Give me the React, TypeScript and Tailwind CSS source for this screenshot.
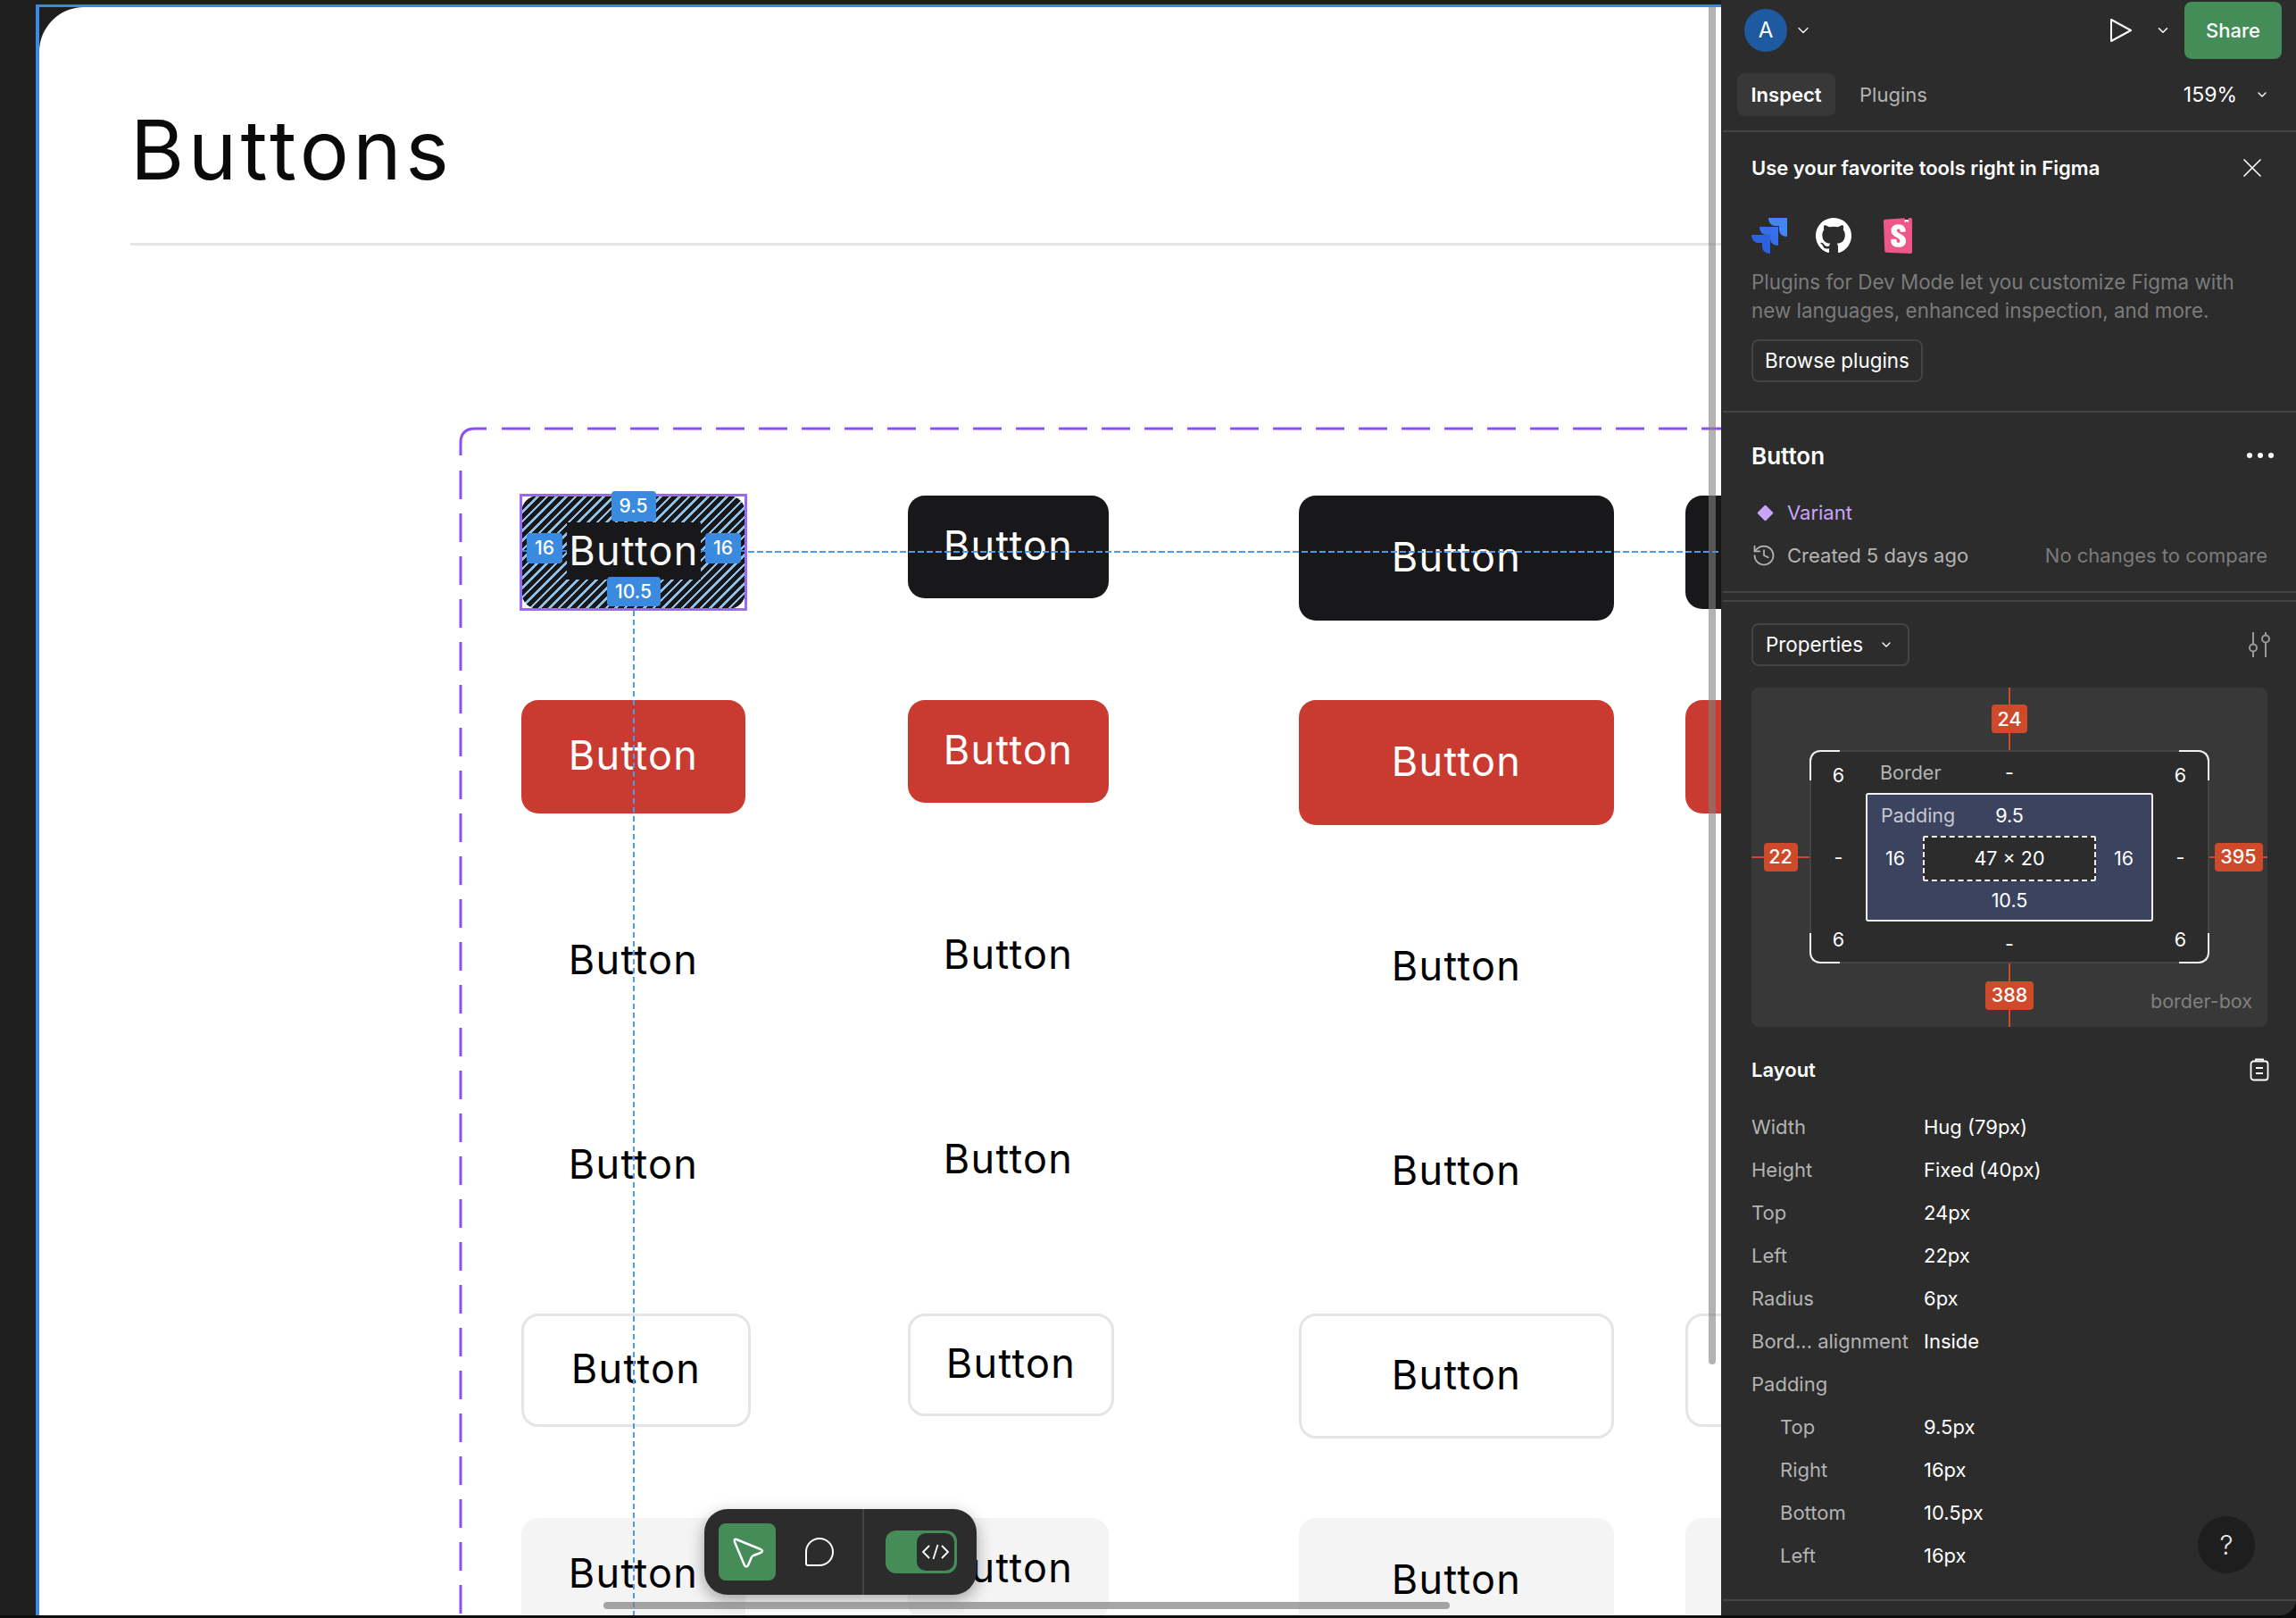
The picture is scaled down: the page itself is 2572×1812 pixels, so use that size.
import React from 'react'
import { ChevronDown, History, X } from 'lucide-react'
import { BsGithub } from 'react-icons/bs'
import { SiStorybook } from 'react-icons/si'

const rowStyles = [
  'bg-[#18181a] text-white',
  'bg-[#c93b30] text-white',
  'text-black',
  'text-black',
  'border-[3px] border-[#e5e5e8] bg-white text-black',
  'bg-[#f4f4f4] text-black',
]

const columnSizes = ['w-[251px] h-[127px]', 'w-[225px] h-[115px]', 'w-[353px] h-[140px]', 'w-[251px] h-[127px]']
const outlineSizes = ['w-[257px] h-[127px]', 'w-[231px] h-[115px]', 'w-[353px] h-[140px]', 'w-[257px] h-[127px]']

const layoutRows = [
  { label: 'Width', value: 'Hug (79px)' },
  { label: 'Height', value: 'Fixed (40px)' },
  { label: 'Top', value: '24px' },
  { label: 'Left', value: '22px' },
  { label: 'Radius', value: '6px' },
  { label: 'Bord... alignment', value: 'Inside' },
  { label: 'Padding', value: '' },
  { label: 'Top', value: '9.5px', indent: true },
  { label: 'Right', value: '16px', indent: true },
  { label: 'Bottom', value: '10.5px', indent: true },
  { label: 'Left', value: '16px', indent: true },
]

function SelectedButton() {
  return (
    <div className="relative flex h-[127px] w-[251px] flex-col items-center rounded-[19px] bg-[repeating-linear-gradient(135deg,#18181a_0_5px,#8fc0e8_5px_7.5px)]">
      <div className="absolute -inset-[2px] rounded-[1px] border-[3px] border-[#9b68f6]" />
      <span className="relative z-10 -mt-[5px] flex h-[34px] w-[50px] items-center justify-center rounded-[4px] bg-[#3a8ae0] text-[21px] font-medium text-white">9.5</span>
      <div className="mt-[1px] flex h-[64px] items-center">
        <span className="h-[2px] w-[6px] bg-[#3a8ae0]" />
        <span className="-mt-[6px] flex h-[34px] w-[40px] items-center justify-center rounded-[4px] bg-[#3a8ae0] text-[21px] font-medium text-white">16</span>
        <span className="h-[2px] w-[5px] bg-[#3a8ae0]" />
        <span className="flex h-[64px] w-[150px] items-center justify-center bg-[#18181a] text-[45px] tracking-[1.3px] text-[#f8f8f8]">Button</span>
        <span className="h-[2px] w-[5px] bg-[#3a8ae0]" />
        <span className="-mt-[6px] flex h-[34px] w-[40px] items-center justify-center rounded-[4px] bg-[#3a8ae0] text-[21px] font-medium text-white">16</span>
        <span className="h-[2px] w-[5px] bg-[#3a8ae0]" />
      </div>
      <span className="relative z-10 -mt-[3px] flex h-[33px] w-[60px] items-center justify-center rounded-[4px] bg-[#3a8ae0] text-[21px] font-medium text-white">10.5</span>
    </div>
  )
}

function ButtonFrame() {
  return (
    <div className="relative mt-[205px] ml-[370px] h-[1400px] w-[1600px]">
      <svg className="absolute -top-[2px] -left-[2px]" width="1600" height="1400" fill="none" stroke="#8b4ff5" strokeWidth="3">
        <path d="M2 32V18Q2 2 18 2H31" />
        <path d="M48 2H1600" strokeDasharray="32 16" />
        <path d="M2 49V1400" strokeDasharray="32 16" />
      </svg>
      <div className="grid auto-rows-[229px] grid-cols-[433px_438px_433px_252px] pt-[75px] pl-[68px]">
        {rowStyles.map((style, row) =>
          columnSizes.map((size, col) =>
            row === 0 && col === 0 ? (
              <SelectedButton key="selected" />
            ) : (
              <div
                key={`${row}-${col}`}
                className={`flex items-center justify-center rounded-[19px] pb-[3px] text-[45px] tracking-[1.3px] ${style} ${row === 4 ? outlineSizes[col] : size}`}
              >
                Button
              </div>
            ),
          ),
        )}
      </div>
      <div className="absolute top-[204px] left-[193px] h-[1125px] w-[2px] bg-[repeating-linear-gradient(180deg,#4a9af5_0_6px,transparent_6px_10px)]" />
      <div className="absolute top-[137px] left-[322px] h-[2px] w-[1090px] bg-[repeating-linear-gradient(90deg,#4a9af5_0_7px,transparent_7px_10px)]" />
    </div>
  )
}

function Toolbar() {
  return (
    <div className="absolute bottom-[23px] left-[745px] flex h-[96px] w-[305px] items-center rounded-[26px] bg-[#2c2c2c] pl-[16px] shadow-[0_6px_18px_rgba(0,0,0,0.35)]">
      <div className="flex h-[64px] w-[64px] items-center justify-center rounded-[8px] bg-[#458c58]">
        <svg width="64" height="64" fill="none" stroke="white" strokeWidth="2.5" strokeLinejoin="round">
          <path d="M20 18L47 29Q51 31 47 33L39 36Q37 37 36.5 39L33 47Q31 50 29 47L18 21Q17 17 20 18Z" />
        </svg>
      </div>
      <div className="ml-[33px] flex h-[64px] w-[32px] items-center">
        <svg width="32" height="32" fill="none" stroke="white" strokeWidth="2">
          <path d="M1 29V16A15 15 0 1 1 16 31H3Q1 31 1 29Z" />
        </svg>
      </div>
      <div className="ml-[32px] h-full w-[2px] bg-[#444444]" />
      <div className="ml-[24px] flex h-[48px] w-[80px] items-center justify-end rounded-[12px] bg-[#458c58] pr-[3px]">
        <div className="flex h-[42px] w-[42px] items-center justify-center rounded-[10px] bg-[#2c2c2c]">
          <svg width="32" height="18" fill="none" stroke="white" strokeWidth="1.8">
            <path d="M9 2L2 9L9 16M23 2L30 9L23 16M18.5 1L13.5 17" />
          </svg>
        </div>
      </div>
    </div>
  )
}

function Canvas() {
  return (
    <div className="min-w-0 flex-1 bg-[#1e1e1e] pt-[5px] pl-[40px]">
      <div className="h-full border-t-[3px] border-l-4 border-[#3f8ae0]">
        <div className="relative h-full overflow-hidden rounded-tl-[50px] bg-white">
          <div className="pt-[104px] pl-[102px]">
            <h1 className="text-[92px] leading-[112px] font-normal tracking-[4.5px] text-[#0a0a0a]">Buttons</h1>
            <div className="mt-[48px] h-[3px] bg-[#e5e5e5]" />
            <ButtonFrame />
          </div>
          <Toolbar />
          <div className="absolute bottom-[7px] left-[632px] h-[8px] w-[948px] rounded-full bg-[#808080]/70" />
          <div className="absolute top-0 right-[6px] h-[1520px] w-[8px] rounded-b-[4px] bg-[#808080]/60" />
        </div>
      </div>
    </div>
  )
}

function JiraLogo() {
  return (
    <svg width="40" height="40" viewBox="0 0 40 40">
      <path d="M40 0H19C19 5 22 9 27 9H31V13C31 18 35 21 40 21Z" fill="#4285f8" />
      <path d="M30 10H9C9 15 12 19 17 19H21V23C21 28 25 31 30 31Z" fill="#3570ea" />
      <path d="M21 19H0C0 24 3 28 8 28H12V32C12 37 16 40 21 40Z" fill="#2b62e0" />
    </svg>
  )
}

function BoxModel() {
  return (
    <div className="mt-[24px] grid h-[380px] grid-cols-[65px_448px_65px] grid-rows-[70px_239px_71px] rounded-[8px] bg-[#383838] text-[21.5px] text-white">
      <div className="col-start-2 flex flex-col items-center">
        <span className="w-[2px] flex-1 bg-[#cf4a2b]" />
        <span className="flex h-[32px] w-[40px] items-center justify-center rounded-[4px] bg-[#cf4a2b] font-medium">24</span>
        <span className="w-[2px] flex-1 bg-[#cf4a2b]" />
      </div>
      <div className="col-start-1 row-start-2 flex items-center">
        <span className="h-[2px] flex-1 bg-[#cf4a2b]" />
        <span className="flex h-[32px] w-[38px] shrink-0 items-center justify-center rounded-[4px] bg-[#cf4a2b] font-medium">22</span>
        <span className="h-[2px] flex-1 bg-[#cf4a2b]" />
      </div>

      <div className="relative col-start-2 row-start-2 grid grid-cols-[61px_322px_61px] grid-rows-[46px_144px_45px] rounded-[12px] border-2 border-[#444444] bg-[#2c2c2c]">
        <div className="absolute -top-[2px] -left-[2px] h-[34px] w-[34px] rounded-tl-[12px] border-t-2 border-l-2 border-[#f0f0f0]" />
        <div className="absolute -top-[2px] -right-[2px] h-[34px] w-[34px] rounded-tr-[12px] border-t-2 border-r-2 border-[#f0f0f0]" />
        <div className="absolute -bottom-[2px] -left-[2px] h-[34px] w-[34px] rounded-bl-[12px] border-b-2 border-l-2 border-[#f0f0f0]" />
        <div className="absolute -right-[2px] -bottom-[2px] h-[34px] w-[34px] rounded-br-[12px] border-r-2 border-b-2 border-[#f0f0f0]" />

        <span className="flex items-center justify-center pt-[6px]">6</span>
        <div className="grid grid-cols-[1fr_auto_1fr] items-center px-[16px]">
          <span className="text-[#b3b3b3]">Border</span>
          <span>-</span>
        </div>
        <span className="flex items-center justify-center pt-[6px]">6</span>

        <span className="flex items-center justify-center">-</span>
        <div className="grid grid-cols-[62px_194px_62px] grid-rows-[46px_51px_43px] items-center rounded-[3px] border-2 border-[#f0f0f0] bg-[#3c435f]">
          <div className="col-span-3 grid grid-cols-[1fr_auto_1fr] items-center px-[15px]">
            <span className="text-[#c4c6cf]">Padding</span>
            <span>9.5</span>
          </div>
          <span className="text-center">16</span>
          <div className="flex h-[51px] items-center justify-center rounded-[2px] border-2 border-dashed border-[#f0f0f0] bg-[#2c2c2c]">47 × 20</div>
          <span className="text-center">16</span>
          <span className="col-span-3 text-center">10.5</span>
        </div>
        <span className="flex items-center justify-center">-</span>

        <span className="flex items-center justify-center pb-[5px]">6</span>
        <span className="flex items-center justify-center pt-[5px]">-</span>
        <span className="flex items-center justify-center pb-[5px]">6</span>
      </div>

      <div className="col-start-3 row-start-2 flex items-center">
        <span className="h-[2px] flex-1 bg-[#cf4a2b]" />
        <span className="flex h-[32px] w-[54px] shrink-0 items-center justify-center rounded-[4px] bg-[#cf4a2b] font-medium">395</span>
        <span className="h-[2px] flex-1 bg-[#cf4a2b]" />
      </div>
      <div className="col-start-2 row-start-3 grid grid-cols-[1fr_auto_1fr]">
        <div className="col-start-2 flex h-[71px] flex-col items-center">
          <span className="w-[2px] flex-1 bg-[#cf4a2b]" />
          <span className="flex h-[32px] w-[54px] items-center justify-center rounded-[4px] bg-[#cf4a2b] font-medium">388</span>
          <span className="w-[2px] flex-1 bg-[#cf4a2b]" />
        </div>
      </div>
      <div className="col-span-2 col-start-2 row-start-3 flex items-end justify-end pr-[17px] pb-[13px] text-[#808080]">border-box</div>
    </div>
  )
}

function Panel() {
  return (
    <aside className="w-[644px] shrink-0 rounded-br-[18px] border-l-2 border-[#2c2c2c] bg-[#2c2c2c] text-[22px] text-white">
      <header className="flex h-[68px] items-center pr-[16px] pl-[24px]">
        <div className="flex h-[48px] w-[48px] items-center justify-center rounded-full bg-[#1e5aa0] text-[24px]">A</div>
        <ChevronDown className="ml-[8px] h-[20px] w-[20px]" strokeWidth={1.5} />
        <svg className="ml-auto" width="26" height="30" fill="none" stroke="white" strokeWidth="2" strokeLinejoin="round">
          <path d="M2 3L24 15L2 27Z" />
        </svg>
        <ChevronDown className="ml-[25px] h-[18px] w-[18px]" strokeWidth={2} />
        <div className="ml-[15px] flex h-[64px] w-[109px] items-center justify-center rounded-[8px] bg-[#448d58] font-medium">Share</div>
      </header>
      <div className="flex h-[80px] items-center border-b-2 border-[#444444] pr-[30px] pb-[2px] pl-[16px]">
        <div className="flex h-[48px] w-[110px] items-center justify-center rounded-[8px] bg-[#383838] font-semibold">Inspect</div>
        <span className="ml-[27px] text-[#b3b3b3]">Plugins</span>
        <span className="ml-auto text-[23px]">159%</span>
        <ChevronDown className="ml-[20px] h-[16px] w-[16px]" strokeWidth={2} />
      </div>

      <section className="border-b-2 border-[#444444] px-[32px] pt-[26px] pb-[32px]">
        <div className="flex h-[28px] items-center justify-between">
          <h2 className="font-semibold">Use your favorite tools right in Figma</h2>
          <X className="-mr-[1px] h-[36px] w-[36px]" strokeWidth={1.1} />
        </div>
        <div className="mt-[42px] flex h-[40px] items-center">
          <JiraLogo />
          <BsGithub className="ml-[32px] h-[40px] w-[40px]" />
          <div className="relative ml-[36px] h-[40px] w-[32px]">
            <div className="absolute inset-[2px] bg-white" />
            <SiStorybook className="absolute -top-0 -left-[4px] h-[40px] w-[40px] text-[#ef5689]" />
          </div>
        </div>
        <p className="mt-[16px] text-[22.4px] leading-[32px] text-[#7b7b7b]">
          Plugins for Dev Mode let you customize Figma with
          <br />
          new languages, enhanced inspection, and more.
        </p>
        <button className="mt-[16px] flex h-[48px] w-[192px] items-center justify-center rounded-[8px] border-2 border-[#444444] text-[22.4px]">Browse plugins</button>
      </section>

      <section className="border-b-2 border-[#444444] px-[32px] pt-[34px] pb-[26px]">
        <div className="flex h-[28px] items-center justify-between">
          <h2 className="text-[26px] font-semibold">Button</h2>
          <div className="-mr-[7px] flex gap-[6px]">
            <span className="h-[6px] w-[6px] rounded-full bg-white" />
            <span className="h-[6px] w-[6px] rounded-full bg-white" />
            <span className="h-[6px] w-[6px] rounded-full bg-white" />
          </div>
        </div>
        <div className="mt-[36px] flex h-[28px] items-center text-[#c9a4f8]">
          <span className="ml-[9px] h-[13px] w-[13px] rotate-45 rounded-[1px] bg-[#c9a4f8]" />
          <span className="ml-[18px]">Variant</span>
        </div>
        <div className="mt-[20px] flex h-[28px] items-center">
          <History className="h-[28px] w-[28px] text-[#b3b3b3]" strokeWidth={1.5} />
          <span className="ml-[12px] text-[#b3b3b3]">Created 5 days ago</span>
          <span className="ml-auto text-[#7b7b7b]">No changes to compare</span>
        </div>
      </section>

      <section className="mt-[8px] border-t-2 border-[#444444] px-[32px] pt-[24px]">
        <div className="flex h-[48px] items-center justify-between">
          <div className="flex h-[48px] w-[177px] items-center rounded-[8px] border-2 border-[#444444] pl-[14px] text-[22.4px]">
            Properties
            <ChevronDown className="ml-[18px] h-[16px] w-[16px]" strokeWidth={2} />
          </div>
          <svg className="-mr-[4px]" width="26" height="30" fill="none" stroke="#9a9a9a" strokeWidth="2">
            <path d="M6 1V14M6 23V29M20 1V4M20 13V29" />
            <circle cx="6" cy="18.5" r="4" />
            <circle cx="20" cy="8.5" r="4" />
          </svg>
        </div>
        <BoxModel />
        <div className="mt-[34px] flex h-[28px] items-center justify-between">
          <h2 className="font-semibold">Layout</h2>
          <svg className="-mr-[2px]" width="22" height="26" fill="none" stroke="white" strokeWidth="1.8">
            <rect x="1.5" y="3.5" width="19" height="21" rx="3" />
            <path d="M7 4V1.5H15V4M7 11H15M7 17H15" />
          </svg>
        </div>
        <div className="relative mt-[26px]">
          {layoutRows.map((row, i) => (
            <div key={i} className="flex h-[48px] items-center">
              <span className={`w-[193px] text-[#b3b3b3] ${row.indent ? 'pl-[32px]' : ''}`}>{row.label}</span>
              <span>{row.value}</span>
            </div>
          ))}
          <div className="absolute right-[14px] bottom-[4px] flex h-[64px] w-[64px] items-center justify-center rounded-full bg-[#1e1e1e] text-[30px] font-light text-[#e6e6e6]">?</div>
        </div>
        <div className="-mx-[32px] mt-[25px] h-[2px] bg-[#444444]" />
      </section>
    </aside>
  )
}

export default function App() {
  return (
    <div className="flex h-[1812px] w-[2572px] overflow-hidden bg-[#0d0d0d] pb-[3px] font-['Inter',sans-serif]">
      <Canvas />
      <Panel />
    </div>
  )
}
